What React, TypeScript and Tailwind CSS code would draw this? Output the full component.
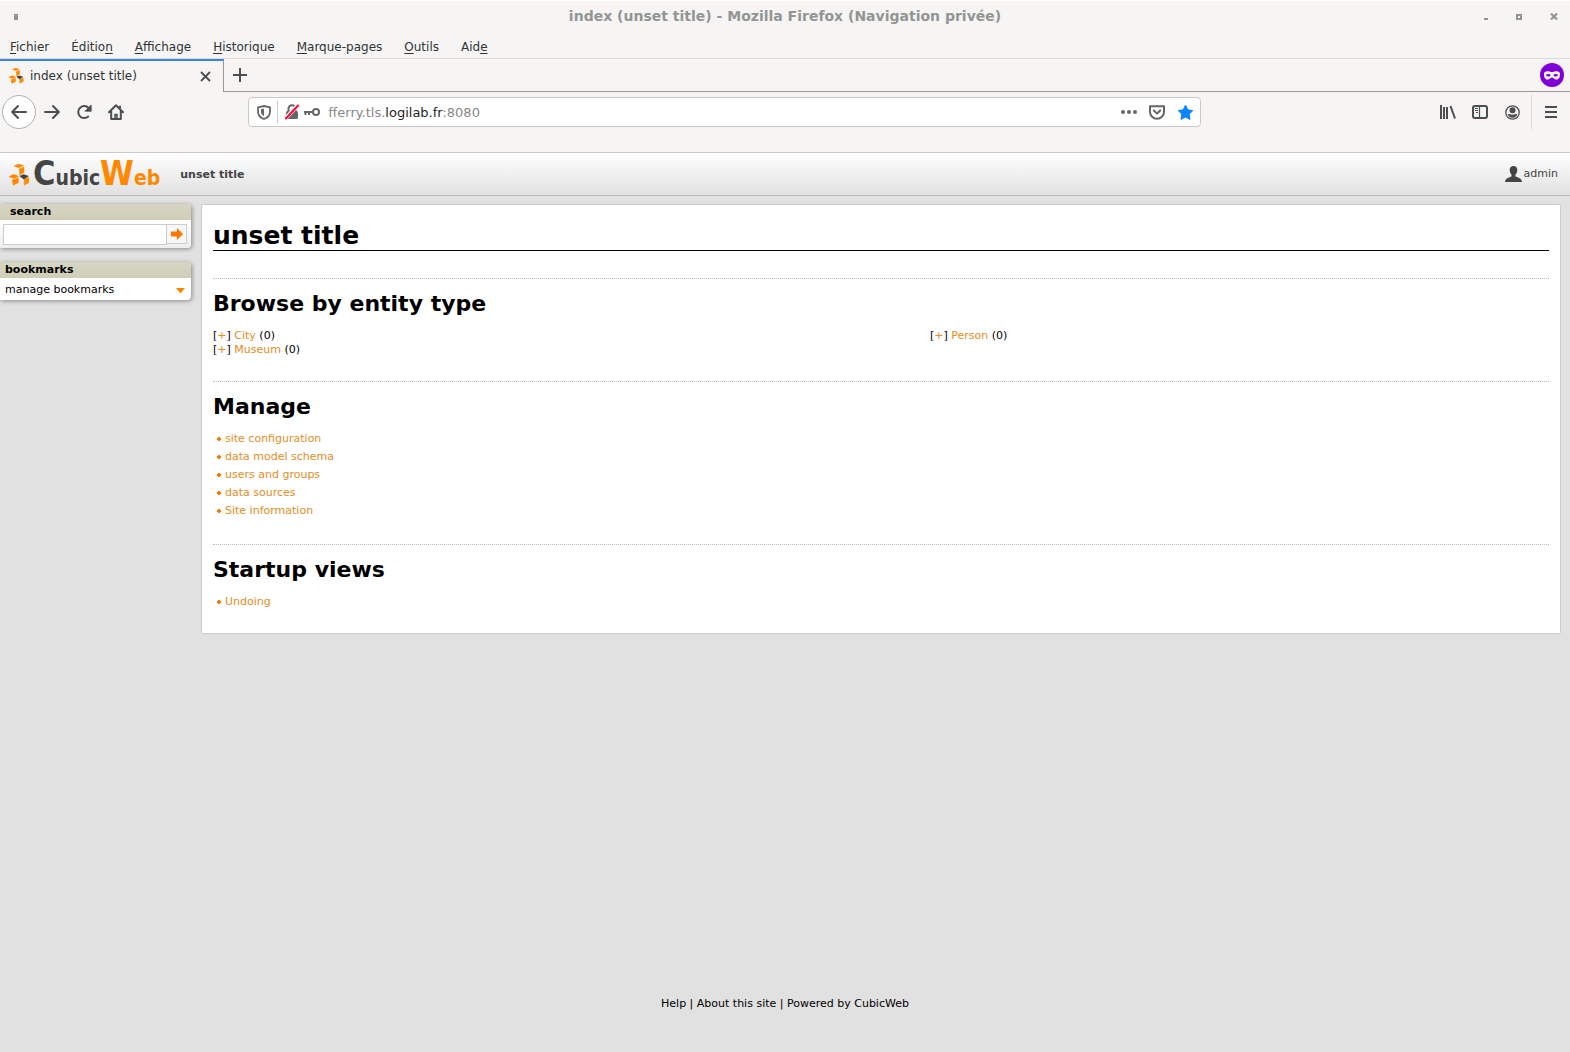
import type { ReactNode } from 'react';

interface EntityType {
  name: string;
  count: number;
}

const menuItems = [
  { before: '', key: 'F', after: 'ichier' },
  { before: 'Éditio', key: 'n', after: '' },
  { before: '', key: 'A', after: 'ffichage' },
  { before: '', key: 'H', after: 'istorique' },
  { before: '', key: 'M', after: 'arque-pages' },
  { before: '', key: 'O', after: 'utils' },
  { before: 'Aid', key: 'e', after: '' },
];

const entityColumns: EntityType[][] = [
  [
    { name: 'City', count: 0 },
    { name: 'Museum', count: 0 },
  ],
  [{ name: 'Person', count: 0 }],
];

const manageLinks = [
  'site configuration',
  'data model schema',
  'users and groups',
  'data sources',
  'Site information',
];

const startupLinks = ['Undoing'];

const CubeMark = ({ className }: { className: string }) => (
  <svg viewBox="0 0 20 22" className={className} aria-hidden="true">
    <path d="M5 2 9.500 0l5 1.800-4.700 2zM10.200 5l4.800-2v5.600L10.800 11z" fill="#ff8800" stroke="#ff8800" strokeWidth=".5" />
    <path d="M0 12.600l5-2.300 4.500 2.100-4.700 2z" fill="#ff8800" stroke="#ff8800" strokeWidth=".5" />
    <path d="M3.200 16l6.100-2.300v5.100l-5.100 2.500z" fill="#ff8800" stroke="#ff8800" strokeWidth=".5" />
    <path d="M15.200 15.600 20 13v5.600l-4.800 2.600z" fill="#ff8800" stroke="#ff8800" strokeWidth=".5" />
    <path d="M10.300 12.100l4.400-1.900 5 1.800-4.700 3.500z" fill="#444" />
  </svg>
);

const BackIcon = () => (
  <svg width="16" height="16" viewBox="0 0 16 16" fill="none" stroke="currentColor" strokeWidth="2" strokeLinecap="round" strokeLinejoin="round">
    <path d="M15 8H1.500M7 2 1.200 8 7 14" />
  </svg>
);

const ForwardIcon = () => (
  <svg width="16" height="16" viewBox="0 0 16 16" fill="none" stroke="currentColor" strokeWidth="2" strokeLinecap="round" strokeLinejoin="round">
    <path d="M1 8h13.500M9 2l5.800 6L9 14" />
  </svg>
);

const ReloadIcon = () => (
  <svg width="16" height="16" viewBox="0 0 16 16" fill="none">
    <path d="M12.200 12.600A6 6 0 1 1 12.600 4" stroke="currentColor" strokeWidth="2" strokeLinecap="round" />
    <path d="M15.200 1v6.200H9z" fill="currentColor" stroke="currentColor" strokeWidth=".8" strokeLinejoin="round" />
  </svg>
);

const HomeIcon = () => (
  <svg width="16" height="16" viewBox="0 0 16 16" fill="none" stroke="currentColor" strokeWidth="2" strokeLinecap="round" strokeLinejoin="round">
    <path d="M1 8.200 8 1.200l7 7M3.200 7v8h9.600V7M12 2.500V4" />
    <path d="M7 15v-4.500h2V15" strokeWidth="1.600" />
  </svg>
);

const ShieldIcon = () => (
  <svg width="14" height="15" viewBox="0 0 14 15" fill="none">
    <path d="M7 1 13 2.400v4C13 10 10.600 12.700 7 14 3.400 12.700 1 10 1 6.400v-4z" stroke="currentColor" strokeWidth="1.800" strokeLinejoin="round" />
    <path d="M7 3.600v7.600C5 10 4 8.500 4 6.400V4.300z" fill="currentColor" />
  </svg>
);

const InsecureIcon = () => (
  <svg width="16" height="16" viewBox="0 0 16 16" fill="none">
    <path d="M4.500 8V4.800a3.500 3.500 0 0 1 7 0V8" stroke="currentColor" strokeWidth="2" />
    <rect x="2" y="7" width="12" height="8" rx="1.500" fill="currentColor" />
    <path d="M1.500 14.500 14 1" stroke="#fff" strokeWidth="4" />
    <path d="M2 14.500 14 1.500" stroke="#ff0039" strokeWidth="2" strokeLinecap="round" />
  </svg>
);

const KeyIcon = () => (
  <svg width="16" height="10" viewBox="0 0 16 10" fill="none" stroke="currentColor" strokeWidth="2">
    <circle cx="12" cy="5" r="3" />
    <path d="M9 5H0M1.500 5v3M5 5v3" />
  </svg>
);

const PocketIcon = () => (
  <svg width="16" height="15" viewBox="0 0 16 15" fill="none" stroke="currentColor" strokeWidth="2" strokeLinecap="round" strokeLinejoin="round">
    <path d="M1 1.200h14V7a7 6.800 0 0 1-14 0z" />
    <path d="m4.800 5.500 3.200 3 3.200-3" />
  </svg>
);

const StarIcon = () => (
  <svg width="17" height="17" viewBox="0 0 17 17">
    <path d="m8.500 1.200 2.300 4.600 5 .8-3.600 3.600.8 5.200-4.500-2.400L4 15.400l.8-5.200L1.200 6.600l5-.8z" fill="#0a84ff" stroke="#0a84ff" strokeLinejoin="round" />
  </svg>
);

const LibraryIcon = () => (
  <svg width="16" height="14" viewBox="0 0 16 14" fill="none" stroke="currentColor" strokeWidth="2">
    <path d="M1 0v14M7 2v12M10.500 1 15 13.500" />
    <path d="M4 2v12" />
  </svg>
);

const SidebarIcon = () => (
  <svg width="16" height="14" viewBox="0 0 16 14" fill="none" stroke="currentColor">
    <rect x="1" y="1" width="14" height="12" rx="2" strokeWidth="2" />
    <path d="M7.500 1v12" strokeWidth="1.200" />
    <path d="M3 3.500h3M3 5.500h3M4 7.500h2" />
  </svg>
);

const AccountIcon = () => (
  <svg width="15" height="15" viewBox="0 0 15 15" fill="none">
    <circle cx="7.500" cy="7.500" r="6.700" stroke="currentColor" strokeWidth="1.300" />
    <circle cx="7.500" cy="5.200" r="3" fill="currentColor" />
    <path d="M2.800 9.300c1.300-.8 2 .4 4.700.4s3.400-1.200 4.700-.4c-.6 2.200-2.400 3.500-4.700 3.500S3.400 11.500 2.800 9.300z" fill="currentColor" />
  </svg>
);

const MaskIcon = () => (
  <svg width="24" height="24" viewBox="0 0 24 24" aria-label="Navigation privée">
    <circle cx="12" cy="12" r="12" fill="#8000d7" />
    <path d="M4 11c0-2.300 2-3 4-2.800 2 .1 2.800 1 4 1s2-.9 4-1c2-.2 4 .5 4 2.800 0 3-1 5.500-3.500 5.500-2.300 0-2.800-2-4.500-2s-2.200 2-4.500 2C5 16.500 4 14 4 11z" fill="#fff" />
    <ellipse cx="8.300" cy="12.200" rx="2.200" ry="1.300" fill="#8000d7" />
    <ellipse cx="15.700" cy="12.200" rx="2.200" ry="1.300" fill="#8000d7" />
  </svg>
);

const UserIcon = () => (
  <svg width="17" height="16" viewBox="0 0 17 16" fill="#444">
    <path d="M8.500 0c2.300 0 3.800 1.500 3.800 3.900 0 1.800-.8 3.700-1.800 4.700v1.800c2.500 1 6.200 1.600 6.500 5.600H0c.3-4 4-4.600 6.500-5.600V8.600c-1-1-1.800-2.900-1.800-4.700C4.700 1.500 6.200 0 8.500 0z" />
  </svg>
);

const ToolButton = ({ label, children }: { label: string; children: ReactNode }) => (
  <button type="button" aria-label={label} className="flex h-8 w-8 items-center justify-center text-[#4a4f50]">
    {children}
  </button>
);

const TitleBar = () => (
  <div className="flex h-8 items-center border-t border-white px-3">
    <div className="flex flex-1">
      <span className="ml-0.5 h-1.5 w-1 bg-[#929595]" />
    </div>
    <div className="pb-px text-sm font-bold text-[#929595]">
      index (unset title) - Mozilla Firefox (Navigation privée)
    </div>
    <div className="flex flex-1 items-center justify-end gap-7 text-[#929595]">
      <button type="button" aria-label="Réduire" className="flex h-1.5 w-1 items-end">
        <span className="h-0.5 w-1 bg-[#929595]" />
      </button>
      <button type="button" aria-label="Agrandir" className="h-1.5 w-1.5 border-2 border-[#929595]" />
      <button type="button" aria-label="Fermer">
        <svg width="8" height="7" viewBox="0 0 8 7" stroke="currentColor" strokeWidth="2.200">
          <path d="m1 .5 6 6M7 .5l-6 6" />
        </svg>
      </button>
    </div>
  </div>
);

const MenuBar = () => (
  <nav className="flex h-[26px] items-center gap-[22px] px-2.5 pt-1 text-xs text-[#2e3436]">
    {menuItems.map((item) => (
      <button type="button" key={item.key}>
        {item.before}
        <span className="underline underline-offset-2">{item.key}</span>
        {item.after}
      </button>
    ))}
  </nav>
);

const TabStrip = () => (
  <div className="flex h-[34px] border-t border-[#dcdad7] text-[#2e3436]">
    <div className="flex w-[224px] items-center border-t-2 border-r border-t-[#3584e4] border-r-[#999] pr-2 pb-px pl-2">
      <CubeMark className="h-4 w-4" />
      <span className="ml-1.5 flex-1 text-xs">index (unset title)</span>
      <button type="button" aria-label="Fermer l'onglet" className="p-1 text-[#4a4f50]">
        <svg width="11" height="11" viewBox="0 0 11 11" stroke="currentColor" strokeWidth="1.800">
          <path d="m1 1 9 9M10 1l-9 9" />
        </svg>
      </button>
    </div>
    <div className="flex flex-1 items-center justify-between border-b border-[#999] pr-1.5 pl-2">
      <button type="button" aria-label="Nouvel onglet" className="text-[#4a4f50]">
        <svg width="16" height="16" viewBox="0 0 16 16" stroke="currentColor" strokeWidth="2">
          <path d="M8 1v14M1 8h14" />
        </svg>
      </button>
      <MaskIcon />
    </div>
  </div>
);

const NavBar = () => (
  <div className="flex h-10 items-center">
    <button
      type="button"
      aria-label="Page précédente"
      className="ml-0.5 flex h-[34px] w-[34px] items-center justify-center rounded-full border border-[#b3b0ac] bg-white text-[#4a4f50]"
    >
      <BackIcon />
    </button>
    <ToolButton label="Page suivante"><ForwardIcon /></ToolButton>
    <ToolButton label="Actualiser"><ReloadIcon /></ToolButton>
    <ToolButton label="Accueil"><HomeIcon /></ToolButton>
    <div className="ml-px flex-1" />
    <div className="flex h-[30px] w-[953px] min-w-0 items-center rounded border border-[#cdc7c2] bg-white pr-1.5 pl-2 text-[#666]">
      <ShieldIcon />
      <span className="mx-1.5 h-[22px] w-px bg-[#ccc]" />
      <InsecureIcon />
      <span className="ml-1"><KeyIcon /></span>
      <a href="#" aria-label="fferry.tls.logilab.fr:8080" className="ml-2 flex-1 pt-px text-[13px] text-[#888]">
        fferry.tls.<span className="text-[#1c1f20]">logilab.fr</span>:8080
      </a>
      <button type="button" aria-label="Actions pour la page" className="flex gap-0.5">
        <span className="h-1 w-1 rounded-full bg-[#666]" />
        <span className="h-1 w-1 rounded-full bg-[#666]" />
        <span className="h-1 w-1 rounded-full bg-[#666]" />
      </button>
      <button type="button" aria-label="Pocket" className="ml-3"><PocketIcon /></button>
      <button type="button" aria-label="Marque-page" className="ml-3"><StarIcon /></button>
    </div>
    <div className="flex-2" />
    <ToolButton label="Bibliothèque"><LibraryIcon /></ToolButton>
    <ToolButton label="Panneaux latéraux"><SidebarIcon /></ToolButton>
    <ToolButton label="Compte"><AccountIcon /></ToolButton>
    <span className="mx-[3px] h-[34px] w-px bg-[#dcdad7]" />
    <div className="mr-[3px]">
      <ToolButton label="Menu">
        <svg width="12" height="12" viewBox="0 0 12 12" stroke="currentColor" strokeWidth="2">
          <path d="M0 1h12M0 6h12M0 11h12" />
        </svg>
      </ToolButton>
    </div>
  </div>
);

const SiteHeader = () => (
  <header className="flex h-11 items-center border-t border-b border-t-[#cdc7c2] border-b-[#bbb] bg-linear-to-b from-white to-[#e1e1e1] pr-3 pl-[9px]">
    <a href="#" className="flex items-center pt-0.5" aria-label="CubicWeb">
      <CubeMark className="h-[22px] w-5" />
      <span className="ml-1 flex items-baseline font-['DejaVu_Sans_Condensed','DejaVu_Sans',sans-serif] text-[21px] leading-6 font-bold text-[#444]">
        <span className="text-[34px]">C</span>
        ubic
        <span className="text-[34px] text-[#ff8800]">W</span>
        <span className="text-[#ff8800]">eb</span>
      </span>
    </a>
    <span className="ml-5 flex-1 pt-0.5 text-[11px] font-bold text-[#444]">unset title</span>
    <a href="#" className="flex items-center gap-0.5 text-[11px] text-[#444]">
      <UserIcon />
      admin
    </a>
  </header>
);

const SideBar = () => (
  <aside className="flex w-[191px] flex-col gap-[14px]">
    <form className="rounded-r bg-white shadow-[1px_1px_4px_#888]">
      <label htmlFor="rql" className="block h-4 rounded-tr bg-linear-to-b from-[#d5d5c3] to-[#cfceb6] pl-2.5 text-[11px] leading-4 font-bold">
        search
      </label>
      <div className="flex h-7 items-center rounded-br bg-linear-to-b from-white to-[#eee] pl-[3px]">
        <input id="rql" type="text" className="h-[21px] w-[164px] border border-[#ccc] bg-white px-1 text-[11px]" />
        <button type="submit" aria-label="search" className="flex h-5 w-5 items-center justify-center border border-l-0 border-[#ccc] bg-[#f7f7f7]">
          <svg width="12" height="12" viewBox="0 0 12 12" fill="#ff7700">
            <path d="M0 3.500h6V0l6 6-6 6V8.500H0z" />
          </svg>
        </button>
      </div>
    </form>
    <section className="rounded-r bg-white shadow-[1px_1px_4px_#888]">
      <h2 className="h-4 rounded-tr bg-linear-to-b from-[#d5d5c3] to-[#cfceb6] pl-[5px] text-[11px] leading-4 font-bold">bookmarks</h2>
      <button type="button" className="flex h-[22px] w-full items-center justify-between pt-0.5 pr-1.5 pl-[5px] text-[11px]">
        manage bookmarks
        <svg width="9" height="5" viewBox="0 0 9 5" fill="#ff8800">
          <path d="M0 0h9L5 5H4z" />
        </svg>
      </button>
    </section>
  </aside>
);

const Section = ({ title, children }: { title: string; children: ReactNode }) => (
  <section className="mb-6 border-t border-dotted border-[#bbb] pt-[11px] last:mb-0">
    <h2 className="mb-[9px] text-[22px] leading-7 font-bold">{title}</h2>
    {children}
  </section>
);

const LinkList = ({ links }: { links: string[] }) => (
  <ul className="text-[11px] leading-[18px]">
    {links.map((link) => (
      <li key={link} className="flex items-center gap-1 pl-1">
        <svg width="4" height="4" viewBox="0 0 4 4" fill="#ff7700">
          <path d="M1 0h2v1h1v2H3v1H1V3H0V1h1z" />
        </svg>
        <a href="#" className="text-[#e68d24]">{link}</a>
      </li>
    ))}
  </ul>
);

const App = () => (
  <div className="flex min-h-screen flex-col bg-[#e1e1e1] font-['DejaVu_Sans',sans-serif] text-black">
    <div className="bg-[#f6f5f3] pb-5">
      <TitleBar />
      <MenuBar />
      <TabStrip />
      <NavBar />
    </div>
    <SiteHeader />

    <div className="flex flex-1 items-start gap-2.5 pt-2 pr-[9px]">
      <SideBar />
      <main className="flex-1 rounded-xs border border-[#ccc] bg-white px-[11px] pt-4 pb-[22px]">
        <h1 className="mb-[27px] border-b border-black text-[25px] leading-[29px] font-bold">unset title</h1>

        <Section title="Browse by entity type">
          <div className="grid grid-cols-[717fr_619fr] pt-0.5 text-[11px] leading-[14px]">
            {entityColumns.map((column, index) => (
              <ul key={index}>
                {column.map((entity) => (
                  <li key={entity.name}>
                    [<a href="#" className="text-[#e68d24]">+</a>]{' '}
                    <a href="#" className="text-[#e68d24]">{entity.name}</a> ({entity.count})
                  </li>
                ))}
              </ul>
            ))}
          </div>
        </Section>

        <Section title="Manage">
          <LinkList links={manageLinks} />
        </Section>

        <Section title="Startup views">
          <LinkList links={startupLinks} />
        </Section>
      </main>
    </div>

    <footer className="pb-[39px] text-center text-[11px] leading-[18px]">
      <a href="#">Help</a> | <a href="#">About this site</a> | <a href="#">Powered by CubicWeb</a>
    </footer>
  </div>
);

export default App;
